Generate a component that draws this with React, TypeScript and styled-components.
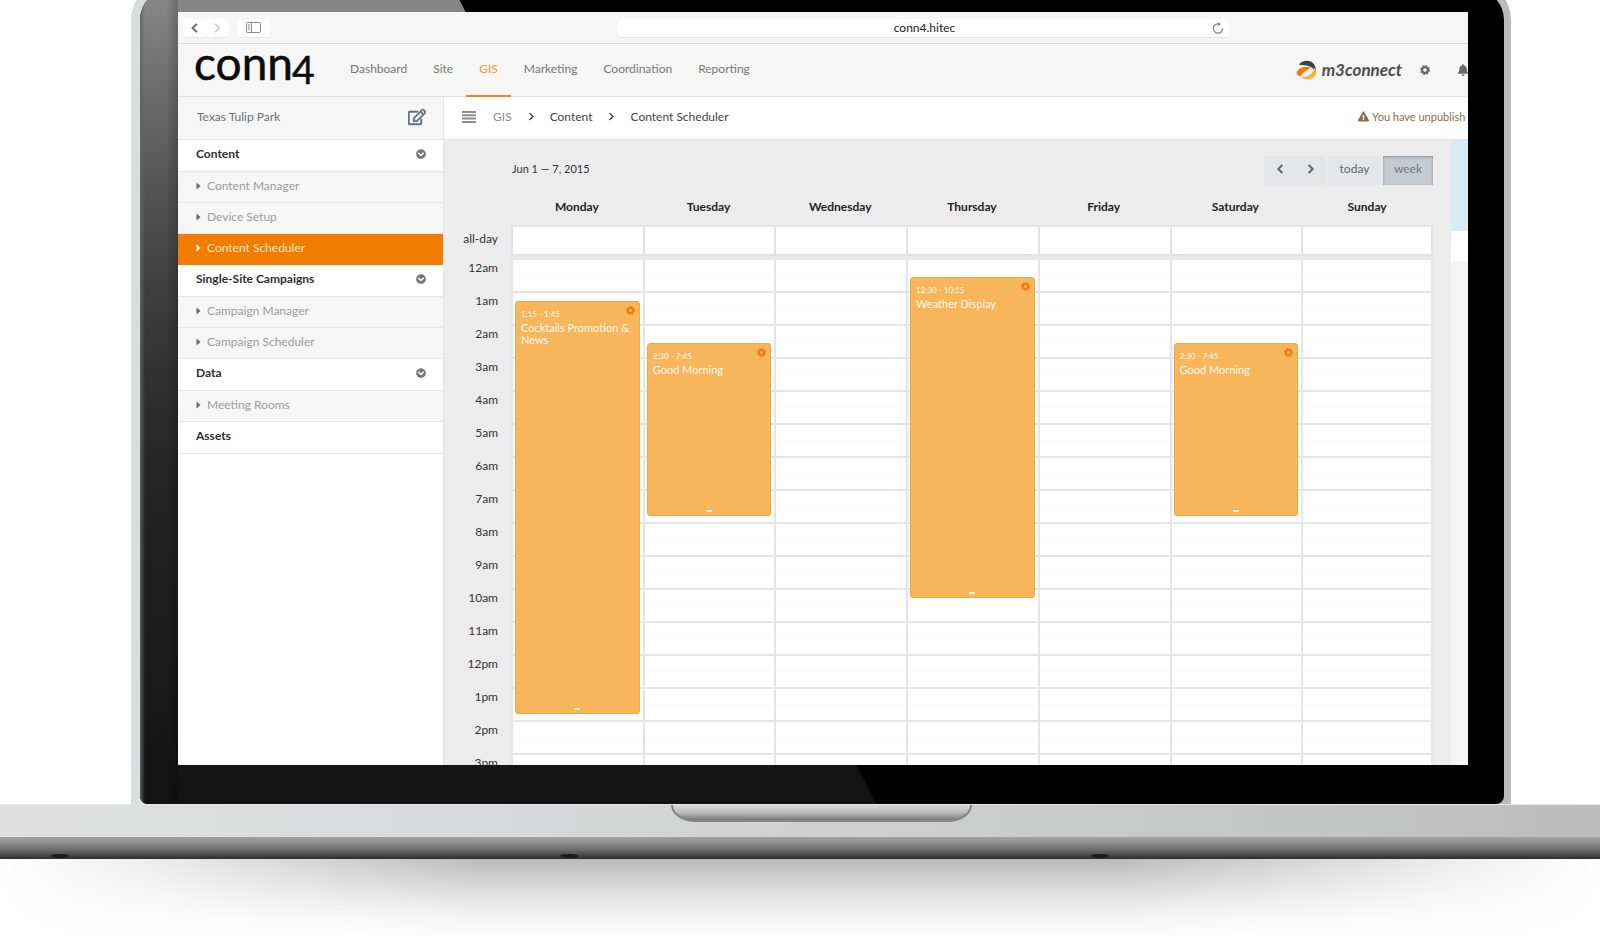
import React from "react";
import styled, { createGlobalStyle } from "styled-components";
import {
  FaBell,
  FaChevronCircleDown,
  FaChevronLeft,
  FaChevronRight,
  FaExclamationTriangle,
  FaRegEdit,
} from "react-icons/fa";

const HOUR = 33;

const GlobalStyle = createGlobalStyle`
  * { box-sizing: border-box; }
  body { margin: 0; background: #fff; font-family: Lato, "Open Sans", sans-serif; font-size: 12px; line-height: 16px; color: #333; }
  button, input { font: inherit; color: inherit; border: 0; padding: 0; background: none; }
  a { color: inherit; text-decoration: none; }
  ul, ol { list-style: none; margin: 0; padding: 0; }
  svg { display: block; flex: none; }
`;

/* ---------- laptop ---------- */

const Page = styled.div`
  display: flex;
  flex-direction: column;
  height: 100vh;
  overflow: hidden;
`;

const Lid = styled.div`
  flex: 1 1 0;
  min-height: 0;
  display: flex;
  margin: -20px 89px 0 131px;
  padding: 9px 7px 0 9px;
  border-radius: 40px 40px 0 0;
  background: linear-gradient(to right, #dadcde, #bababa);
`;

const Bezel = styled.div`
  position: relative;
  flex: 1;
  min-width: 0;
  display: flex;
  padding: 23px 36px 39px 38px;
  border-radius: 31px 31px 8px 8px;
  background: #000;
  overflow: hidden;
`;

const Glare = styled.div`
  position: absolute;
  inset: 0;
  clip-path: polygon(0 0, 23% 0, 54% 100%, 0 100%);
  background: linear-gradient(to bottom, #8a8a8a, #6d6d6d 12%, #535353 25%, #3e3e3e 37%, #2f2f2f 49%, #242424 61%, #1a1a1a 85%, #121212);
`;

const EdgeShade = styled.div`
  position: absolute;
  inset: 0 auto 0 0;
  width: 38px;
  background: linear-gradient(to right, rgba(100, 100, 100, 0.9), rgba(80, 80, 80, 0) 5px, rgba(0, 0, 0, 0) 26px, rgba(0, 0, 0, 0.2));
`;

const Screen = styled.div`
  position: relative;
  flex: 1;
  min-width: 0;
  display: flex;
  flex-direction: column;
  background: #fff;
  overflow: hidden;
`;

const Deck = styled.div`
  flex: none;
  display: flex;
  justify-content: center;
  height: 33px;
  padding-left: 43px;
  border-top: 1px solid #e6e6e8;
  background: linear-gradient(to right, #dfe0df, #dadbdc 25%, #d2d3d3 45%, #c8c9c9 70%, #bdbdbd);
`;

const Notch = styled.div`
  width: 301px;
  height: 17px;
  border: 2px solid #858585;
  border-top: 0;
  border-radius: 0 0 24px 24px / 0 0 17px 17px;
  background: linear-gradient(#d8d8d8, #bcbcbc 50%, #777);
`;

const Front = styled.div`
  flex: none;
  display: grid;
  grid-template-columns: 509fr 531fr 509fr;
  align-items: end;
  height: 22px;
  padding: 0 0 1px 51px;
  background: linear-gradient(#a3a3a3, #8f8f8f 25%, #6a6a6a 60%, #2c2c2c);
`;

const Foot = styled.span`
  width: 18px;
  height: 4px;
  border-radius: 50%;
  background: #1b1b1b;
`;

const Shadow = styled.div`
  flex: none;
  height: 78px;
  background:
    linear-gradient(to right, #fff, rgba(255, 255, 255, 0.7) 10%, rgba(255, 255, 255, 0) 30%, rgba(255, 255, 255, 0) 70%, rgba(255, 255, 255, 0.7) 90%, #fff),
    linear-gradient(#bbb, #cfcfcf 25%, #e4e4e4 50%, #f5f5f5 75%, #fdfdfd);
`;

/* ---------- browser bar ---------- */

const BrowserBar = styled.div`
  flex: none;
  display: flex;
  align-items: center;
  height: 32px;
  padding: 0 239px 0 5px;
  background: #f6f6f6;
  border-bottom: 1px solid #d9d9d9;
`;

const ToolButton = styled.button<{ $wide?: boolean; $faint?: boolean }>`
  display: grid;
  place-items: center;
  width: ${(p) => (p.$wide ? 33 : 23)}px;
  height: 18px;
  margin-left: ${(p) => (p.$wide ? 8 : 0)}px;
  border-radius: 3px;
  background: #fff;
  color: ${(p) => (p.$faint ? "#cfcfcf" : "#666")};
  box-shadow: 0 1px 1px rgba(0, 0, 0, 0.06);
`;

const Address = styled.div`
  flex: 1;
  display: flex;
  align-items: center;
  height: 18px;
  margin-left: 348px;
  padding-left: 24px;
  border-radius: 3px;
  background: #fff;
  box-shadow: 0 1px 1px rgba(0, 0, 0, 0.08);
`;

const AddressInput = styled.input`
  flex: 1;
  min-width: 0;
  text-align: center;
  color: #222;
`;

const ReloadButton = styled.button`
  display: grid;
  place-items: center;
  width: 22px;
  height: 18px;
  color: #888;
`;

/* ---------- app header ---------- */

const Header = styled.header`
  flex: none;
  display: flex;
  align-items: center;
  height: 53px;
  padding-left: 16px;
  background: #f6f6f6;
  border-bottom: 1px solid #e0e0e3;
`;

const Nav = styled.nav`
  display: flex;
  align-self: stretch;
  margin-left: 19px;
`;

const NavLink = styled.a<{ $active?: boolean }>`
  display: flex;
  align-items: center;
  height: 53px;
  padding: 0 13px 1px;
  color: ${(p) => (p.$active ? "#f5932b" : "#777")};
  border-bottom: 2px solid ${(p) => (p.$active ? "#f0861a" : "transparent")};
`;

const HeaderTools = styled.div`
  display: flex;
  align-items: center;
  margin: 0 -1px 0 auto;
  color: #6b6b6b;
`;

const Brand = styled.a`
  display: flex;
  align-items: center;
  gap: 5px;
  font-size: 17px;
  font-weight: 700;
  font-style: italic;
  line-height: 20px;
  color: #4d4d4f;
`;

const IconButton = styled.button<{ $gap?: number }>`
  margin-left: ${(p) => p.$gap ?? 0}px;
`;

/* ---------- body ---------- */

const Body = styled.div`
  flex: 1;
  min-height: 0;
  display: flex;
`;

const Sidebar = styled.aside`
  flex: none;
  width: 266px;
  border-right: 1px solid #e4e4e8;
  background: #fff;
`;

const Site = styled.div`
  display: flex;
  align-items: center;
  justify-content: space-between;
  height: 43px;
  padding: 0 17px 3px 19px;
  background: #f6f6f6;
  border-bottom: 1px solid #e4e4e4;
  color: #66707a;
`;

const SectionRow = styled.div`
  display: flex;
  align-items: center;
  justify-content: space-between;
  height: 32px;
  padding: 0 17px 3px 18px;
  border-bottom: 1px solid #e6e6e6;
  font-weight: 700;
  color: #2e2e2e;

  button { color: #777; }
`;

const ItemLink = styled.a<{ $active?: boolean }>`
  display: flex;
  align-items: center;
  gap: 6px;
  height: 31px;
  padding: 0 17px 3px 18px;
  background: ${(p) => (p.$active ? "#f07d00" : "#f6f6f6")};
  border-bottom: 1px solid ${(p) => (p.$active ? "#f07d00" : "#e6e6e6")};
  color: ${(p) => (p.$active ? "#ffe3c2" : "#9c9c9c")};

  svg { color: ${(p) => (p.$active ? "#fff" : "#6b6b6b")}; }
`;

const Main = styled.main`
  flex: 1;
  min-width: 0;
  display: flex;
  flex-direction: column;
`;

const CrumbBar = styled.div`
  flex: none;
  display: flex;
  align-items: center;
  height: 43px;
  padding: 0 0 3px 18px;
  background: #fff;
  border-bottom: 1px solid #e2e2e2;
  overflow: hidden;
  white-space: nowrap;
`;

const Crumbs = styled.ol`
  display: flex;
  align-items: center;
  gap: 15px;
  margin-left: 17px;
  color: #444;

  li { display: flex; align-items: center; gap: 14px; }
  li:first-child a { color: #8c8c8c; }
`;

const Warning = styled.div`
  display: flex;
  align-items: center;
  gap: 3px;
  width: 110px;
  margin-left: auto;
  font-size: 11px;
  color: #8a6d4b;
`;

const Work = styled.div`
  flex: 1;
  min-height: 0;
  display: flex;
  background: #ececec;
`;

const Calendar = styled.section`
  flex: 1;
  min-width: 0;
  padding: 16px 18px 0 10px;
  overflow: hidden;
`;

const SidePanel = styled.aside`
  flex: none;
  width: 17px;
  background: #f5f5f5;
`;

const PanelBlock = styled.div<{ $tall?: boolean }>`
  height: ${(p) => (p.$tall ? 91 : 30)}px;
  background: ${(p) => (p.$tall ? "#d8ebf5" : "#fff")};
`;

const CalendarBar = styled.div`
  display: flex;
  align-items: center;
  height: 29px;
  padding-left: 58px;
`;

const Range = styled.h1`
  margin: 0 auto 0 0;
  padding-bottom: 3px;
  font-size: 11px;
  font-weight: 400;
  line-height: 16px;
`;

const CalButton = styled.button<{ $w: number; $active?: boolean; $gap?: boolean }>`
  display: grid;
  place-items: center;
  width: ${(p) => p.$w}px;
  height: 29px;
  padding-bottom: 3px;
  margin-left: ${(p) => (p.$gap ? 2 : 0)}px;
  background: ${(p) => (p.$active ? "#c6cbd2" : "#e4e6e9")};
  color: ${(p) => (p.$active ? "#6d7782" : "#5f6973")};
  box-shadow: ${(p) => (p.$active ? "inset 0 1px 3px rgba(60,70,80,.45)" : "none")};
`;

const Grid = styled.table`
  width: 100%;
  table-layout: fixed;
  border-collapse: separate;
  border-spacing: 0;

  th, td { padding: 0; }
`;

const DayHead = styled.th`
  height: 40px;
  && { padding-top: 4px; }
  font-weight: 700;
  color: #222;
`;

const LabelHead = styled.th`
  width: 57px;
`;

const RowLabel = styled.th<{ $allDay?: boolean }>`
  height: ${(p) => (p.$allDay ? 31 : HOUR)}px;
  && { padding: ${(p) => (p.$allDay ? "0 13px 3px 0" : "0 13px 0 0")}; }
  vertical-align: ${(p) => (p.$allDay ? "middle" : "top")};
  text-align: right;
  font-weight: 400;
  color: #333;
`;

const AllDayCell = styled.td`
  background: #fff;
  border: 2px solid #e2e3e8;
  border-right-width: 0;

  &:last-child { border-right-width: 2px; }
`;

const Divider = styled.td`
  height: 4px;
  background: #e8e9ec;
`;

const HourCell = styled.td`
  position: relative;
  height: ${HOUR}px;
  vertical-align: top;
  background: linear-gradient(#fff 15px, #fafafb 15px, #fafafb 16px, #fff 16px);
  border-left: 2px solid #e3e5e9;
  border-bottom: 2px solid #e3e5e9;

  &:last-child { border-right: 2px solid #e3e5e9; }
`;

const EventCard = styled.article`
  position: absolute;
  z-index: 1;
  left: 2px;
  right: 3px;
  padding: 6px 8px 0 5px;
  border: 1px solid #f5a93a;
  border-radius: 3px;
  background: #f7b55c;
  color: #fffaf0;
  overflow: hidden;
`;

const EventTime = styled.time`
  display: block;
  font-size: 8px;
  line-height: 12px;
`;

const EventTitle = styled.h2`
  margin: 2px 0 0;
  font-size: 11px;
  font-weight: 400;
  line-height: 12px;
`;

const EventGear = styled.button`
  position: absolute;
  top: 4px;
  right: 4px;
  color: #ee7d12;
`;

const EventHandle = styled.span`
  position: absolute;
  bottom: 3px;
  left: 50%;
  width: 6px;
  height: 2px;
  margin-left: -3px;
  border-radius: 1px;
  background: #fff3df;
`;

/* ---------- drawings ---------- */

const ConnLogo = () => (
  <svg width="124" height="52" viewBox="0 0 124 52" role="img" aria-label="conn4" fontFamily="Lato" fill="#0c0c0c" stroke="#0c0c0c" strokeWidth=".5">
    <text x="0" y="36" fontSize="46">conn</text>
    <text x="98" y="40" fontSize="39">4</text>
  </svg>
);

const BallLogo = () => (
  <svg width="21" height="20" viewBox="0 0 21 20" aria-hidden="true">
    <path d="M3 4.500C6 .5 13 -.5 17 3C20 6 20.300 9.500 19 12C18 8 14 6 10 5.500C7.500 5.200 5 5.300 3 4.500Z" fill="#3f4144" />
    <path d="M.6 12.500C2 8 8 6 14.500 7.500C12 11 7 11 4.500 16.500C2 15.500 .6 14 .6 12.500Z" fill="#f07d00" />
    <path d="M18 7.500C21.500 11 20.500 16 16 18.300C12 20.200 7.500 19.300 5.500 17C11 17.300 17.500 14 18 7.500Z" fill="#fbb034" />
  </svg>
);

const Gear = ({ size }: { size: number }) => (
  <svg width={size} height={size} viewBox="0 0 10 10" fill="none" stroke="currentColor">
    <circle cx="5" cy="5" r="3" strokeWidth="2.400" />
    <circle cx="5" cy="5" r="4.400" strokeWidth="1.200" strokeDasharray="1.728 1.728" />
  </svg>
);

const Caret = () => (
  <svg width="5" height="8" viewBox="0 0 5 8" fill="currentColor">
    <path d="M.5 .5L4.500 4L.5 7.500Z" />
  </svg>
);

const Bars = () => (
  <svg width="14" height="12" viewBox="0 0 14 12" fill="#8e8e8e">
    <path d="M0 0H14V2H0ZM0 3.300H14V5.300H0ZM0 6.600H14V8.600H0ZM0 10H14V12H0Z" />
  </svg>
);

const Chevron = ({ flip = false }: { flip?: boolean }) => (
  <svg width="7" height="10" viewBox="0 0 7 10" fill="none" stroke="currentColor" strokeWidth="1.800">
    <path d={flip ? "M1 .8L5.500 5L1 9.200" : "M6 .8L1.500 5L6 9.200"} />
  </svg>
);

const PanelIcon = () => (
  <svg width="15" height="11" viewBox="0 0 15 11" fill="none" stroke="#888">
    <rect x=".5" y=".5" width="14" height="10" rx="1" />
    <path d="M5.500 .5V10.500M2 3H4M2 5H4M2 7H4" />
  </svg>
);

const ReloadIcon = () => (
  <svg width="12" height="12" viewBox="0 0 12 12" fill="none" stroke="currentColor" strokeWidth="1.300">
    <path d="M10.700 6.500A4.700 4.700 0 1 1 7 1.900" />
    <path d="M5.800 0L9 2L5.800 4.200Z" fill="currentColor" stroke="none" />
  </svg>
);

/* ---------- data ---------- */

const NAV = ["Dashboard", "Site", "GIS", "Marketing", "Coordination", "Reporting"];

const MENU = [
  { title: "Content", open: true, items: ["Content Manager", "Device Setup", "Content Scheduler"] },
  { title: "Single-Site Campaigns", open: true, items: ["Campaign Manager", "Campaign Scheduler"] },
  { title: "Data", open: true, items: ["Meeting Rooms"] },
  { title: "Assets", open: false, items: [] as string[] },
];

const DAYS = ["Monday", "Tuesday", "Wednesday", "Thursday", "Friday", "Saturday", "Sunday"];
const HOURS = ["12am", "1am", "2am", "3am", "4am", "5am", "6am", "7am", "8am", "9am", "10am", "11am", "12pm", "1pm", "2pm", "3pm"];

const EVENTS = [
  { day: 0, from: 1.25, to: 13.75, time: "1:15 - 1:45", title: "Cocktails Promotion & News" },
  { day: 1, from: 2.5, to: 7.75, time: "2:30 - 7:45", title: "Good Morning" },
  { day: 3, from: 0.5, to: 10.25, time: "12:30 - 10:15", title: "Weather Display" },
  { day: 5, from: 2.5, to: 7.75, time: "2:30 - 7:45", title: "Good Morning" },
];

export default function App() {
  return (
    <Page>
      <GlobalStyle />
      <Lid>
        <Bezel>
          <Glare />
          <EdgeShade />
          <Screen>
            <BrowserBar>
              <ToolButton aria-label="Back"><Chevron /></ToolButton>
              <ToolButton aria-label="Forward" $faint><Chevron flip /></ToolButton>
              <ToolButton aria-label="Show sidebar" $wide><PanelIcon /></ToolButton>
              <Address>
                <AddressInput aria-label="Address" defaultValue="conn4.hitec" />
                <ReloadButton aria-label="Reload"><ReloadIcon /></ReloadButton>
              </Address>
            </BrowserBar>

            <Header>
              <ConnLogo />
              <Nav>
                {NAV.map((n) => (
                  <NavLink key={n} href="#" $active={n === "GIS"}>{n}</NavLink>
                ))}
              </Nav>
              <HeaderTools>
                <Brand href="#"><BallLogo />m3connect</Brand>
                <IconButton $gap={18} aria-label="Settings"><Gear size={10} /></IconButton>
                <IconButton $gap={27} aria-label="Notifications"><FaBell size={12} /></IconButton>
              </HeaderTools>
            </Header>

            <Body>
              <Sidebar>
                <Site>
                  Texas Tulip Park
                  <button aria-label="Edit site"><FaRegEdit size={18} stroke="currentColor" strokeWidth={16} /></button>
                </Site>
                {MENU.map((s) => (
                  <React.Fragment key={s.title}>
                    <SectionRow>
                      {s.title}
                      {s.open && <button aria-label={"Collapse " + s.title}><FaChevronCircleDown size={10} /></button>}
                    </SectionRow>
                    {s.items.map((i) => (
                      <ItemLink key={i} href="#" $active={i === "Content Scheduler"}>
                        <Caret />
                        {i}
                      </ItemLink>
                    ))}
                  </React.Fragment>
                ))}
              </Sidebar>

              <Main>
                <CrumbBar>
                  <IconButton aria-label="Toggle menu"><Bars /></IconButton>
                  <Crumbs>
                    <li><a href="#">GIS</a></li>
                    <li><FaChevronRight size={9} /><a href="#">Content</a></li>
                    <li><FaChevronRight size={9} /><a href="#">Content Scheduler</a></li>
                  </Crumbs>
                  <Warning><FaExclamationTriangle size={11} />You have unpublish</Warning>
                </CrumbBar>

                <Work>
                  <Calendar>
                    <CalendarBar>
                      <Range>Jun 1 — 7, 2015</Range>
                      <CalButton $w={31} aria-label="Previous week"><FaChevronLeft size={10} stroke="currentColor" strokeWidth={30} /></CalButton>
                      <CalButton $w={31} aria-label="Next week"><FaChevronRight size={10} stroke="currentColor" strokeWidth={30} /></CalButton>
                      <CalButton $w={53} $gap>today</CalButton>
                      <CalButton $w={50} $gap $active>week</CalButton>
                    </CalendarBar>
                    <Grid>
                      <thead>
                        <tr>
                          <LabelHead aria-label="Time" />
                          {DAYS.map((d) => <DayHead key={d} scope="col">{d}</DayHead>)}
                        </tr>
                      </thead>
                      <tbody>
                        <tr>
                          <RowLabel scope="row" $allDay>all-day</RowLabel>
                          {DAYS.map((d) => <AllDayCell key={d} />)}
                        </tr>
                        <tr>
                          <td />
                          <Divider colSpan={7} />
                        </tr>
                        {HOURS.map((h, row) => (
                          <tr key={h}>
                            <RowLabel scope="row">{h}</RowLabel>
                            {DAYS.map((d, col) => (
                              <HourCell key={d}>
                                {row === 0 && EVENTS.filter((e) => e.day === col).map((e) => (
                                  <EventCard key={e.title} style={{ top: e.from * HOUR, height: (e.to - e.from) * HOUR }}>
                                    <EventTime>{e.time}</EventTime>
                                    <EventTitle>{e.title}</EventTitle>
                                    <EventGear aria-label={"Options for " + e.title}><Gear size={9} /></EventGear>
                                    <EventHandle />
                                  </EventCard>
                                ))}
                              </HourCell>
                            ))}
                          </tr>
                        ))}
                      </tbody>
                    </Grid>
                  </Calendar>
                  <SidePanel>
                    <PanelBlock $tall />
                    <PanelBlock />
                  </SidePanel>
                </Work>
              </Main>
            </Body>
          </Screen>
        </Bezel>
      </Lid>
      <Deck><Notch /></Deck>
      <Front><Foot /><Foot /><Foot /></Front>
      <Shadow />
    </Page>
  );
}
